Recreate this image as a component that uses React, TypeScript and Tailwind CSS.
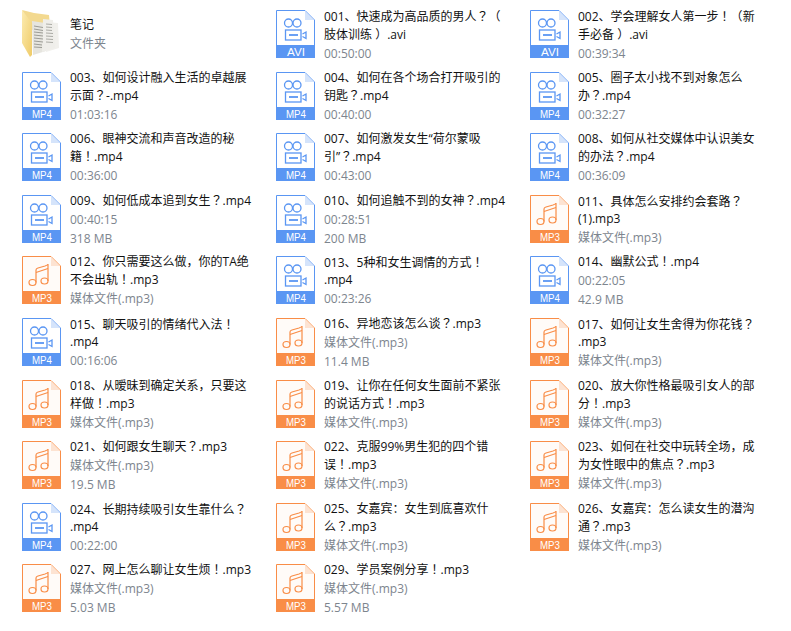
type Kind = "folder" | "AVI" | "MP4" | "MP3";

type Item = { kind: Kind; title: string[]; lines: string[] };

const MEDIA = "媒体文件(.mp3)";

const items: Item[] = [
  { kind: "folder", title: ["笔记"], lines: ["文件夹"] },
  { kind: "AVI", title: ["001、快速成为高品质的男人？（", "肢体训练 ）.avi"], lines: ["00:50:00"] },
  { kind: "AVI", title: ["002、学会理解女人第一步！（新", "手必备 ）.avi"], lines: ["00:39:34"] },
  { kind: "MP4", title: ["003、如何设计融入生活的卓越展", "示面？-.mp4"], lines: ["01:03:16"] },
  { kind: "MP4", title: ["004、如何在各个场合打开吸引的", "钥匙？.mp4"], lines: ["00:40:00"] },
  { kind: "MP4", title: ["005、圈子太小找不到对象怎么", "办？.mp4"], lines: ["00:32:27"] },
  { kind: "MP4", title: ["006、眼神交流和声音改造的秘", "籍！.mp4"], lines: ["00:36:00"] },
  { kind: "MP4", title: ["007、如何激发女生“荷尔蒙吸", "引”？.mp4"], lines: ["00:43:00"] },
  { kind: "MP4", title: ["008、如何从社交媒体中认识美女", "的办法？.mp4"], lines: ["00:36:09"] },
  { kind: "MP4", title: ["009、如何低成本追到女生？.mp4"], lines: ["00:40:15", "318 MB"] },
  { kind: "MP4", title: ["010、如何追触不到的女神？.mp4"], lines: ["00:28:51", "200 MB"] },
  { kind: "MP3", title: ["011、具体怎么安排约会套路？", "(1).mp3"], lines: [MEDIA] },
  { kind: "MP3", title: ["012、你只需要这么做，你的TA绝", "不会出轨！.mp3"], lines: [MEDIA] },
  { kind: "MP4", title: ["013、5种和女生调情的方式！", ".mp4"], lines: ["00:23:26"] },
  { kind: "MP4", title: ["014、幽默公式！.mp4"], lines: ["00:22:05", "42.9 MB"] },
  { kind: "MP4", title: ["015、聊天吸引的情绪代入法！", ".mp4"], lines: ["00:16:06"] },
  { kind: "MP3", title: ["016、异地恋该怎么谈？.mp3"], lines: [MEDIA, "11.4 MB"] },
  { kind: "MP3", title: ["017、如何让女生舍得为你花钱？", ".mp3"], lines: [MEDIA] },
  { kind: "MP3", title: ["018、从暧昧到确定关系，只要这", "样做！.mp3"], lines: [MEDIA] },
  { kind: "MP3", title: ["019、让你在任何女生面前不紧张", "的说话方式！.mp3"], lines: [MEDIA] },
  { kind: "MP3", title: ["020、放大你性格最吸引女人的部", "分！.mp3"], lines: [MEDIA] },
  { kind: "MP3", title: ["021、如何跟女生聊天？.mp3"], lines: [MEDIA, "19.5 MB"] },
  { kind: "MP3", title: ["022、克服99%男生犯的四个错", "误！.mp3"], lines: [MEDIA] },
  { kind: "MP3", title: ["023、如何在社交中玩转全场，成", "为女性眼中的焦点？.mp3"], lines: [MEDIA] },
  { kind: "MP4", title: ["024、长期持续吸引女生靠什么？", ".mp4"], lines: ["00:22:00"] },
  { kind: "MP3", title: ["025、女嘉宾：女生到底喜欢什", "么？.mp3"], lines: [MEDIA] },
  { kind: "MP3", title: ["026、女嘉宾：怎么读女生的潜沟", "通？.mp3"], lines: [MEDIA] },
  { kind: "MP3", title: ["027、网上怎么聊让女生烦！.mp3"], lines: [MEDIA, "5.03 MB"] },
  { kind: "MP3", title: ["029、学员案例分享！.mp3"], lines: [MEDIA, "5.57 MB"] },
];

function FolderIcon() {
  return (
    <svg width="39" height="48" viewBox="0 0 39 48" className="shrink-0">
      <defs>
        <linearGradient id="fold" x1="0" y1="0" x2="1" y2="1">
          <stop offset="0" stopColor="#fcebb0" />
          <stop offset="1" stopColor="#efcb68" />
        </linearGradient>
      </defs>
      <path d="M0 0 L12 3 L27 5 L28 16 L10 20 Z" fill="#f3d98f" />
      <path d="M24 12 L36 13 L37 38 L24 42 Z" fill="#f1f0ec" />
      <path d="M10 11 L23 13 L24 41 L11 45 Z" fill="#e6e5df" />
      <path d="M21 9 L31 10 L33 38 L20 42 Z" fill="#efeeea" />
      <path d="M12 16 L21 17.5 M12 19 L21 20.5 M12 22 L21 23 M12 25 L21 26 M12 28 L21 29 M12 31 L21 32 M12 34 L20 35 M12 37 L20 37.5" stroke="#9c9c96" strokeWidth="1" />
      <path d="M24 14 L30 14.5 M24 17 L30 17.5 M24 20 L30 20.5 M24 23 L31 23.5 M24 26 L31 26.5 M24 29 L31 29.5 M24 32 L31 32.5" stroke="#acaca6" strokeWidth="1" />
      <path d="M0 0 L0 33 L8 47 L10 45 L10 13 Z" fill="url(#fold)" />
    </svg>
  );
}

function FileIcon({ kind }: { kind: Kind }) {
  const color = kind === "MP3" ? "#f98d47" : "#5a96f3";
  return (
    <svg width="39" height="48" viewBox="0 0 39 48" className="shrink-0">
      <path d="M0.5 0.5 H29 L38.5 10 V47.5 H0.5 Z" fill={kind === "MP3" ? "#fffbf8" : "#ffffff"} stroke={color} />
      <path d="M29 1 V10 H38 Z" fill={kind === "MP3" ? "#fde3d2" : "#d5e4fb"} />
      <rect x="0" y="35" width="39" height="13" fill={color} />
      {kind === "MP3" ? (
        <g fill="none" stroke={color} strokeWidth="1.2">
          <ellipse cx="10.5" cy="26.5" rx="3.5" ry="3" />
          <ellipse cx="22.5" cy="25" rx="3.5" ry="3" />
          <path d="M14 26.5 V14 C14 12.8 14.8 12.4 16 12 L23 10 C24.5 9.5 26 8.8 26 8 V25" />
          <path d="M14 16.5 L26 12.5" />
        </g>
      ) : (
        <g fill="none" stroke={color} strokeWidth="1.3">
          <circle cx="12.5" cy="13" r="4" />
          <circle cx="21" cy="13" r="4" />
          <rect x="9.5" y="20" width="15.5" height="10" />
          <path d="M13 25 H22" strokeWidth="1.8" />
          <path d="M26.5 24 L30 22 V28.5 L26.5 26.5" />
        </g>
      )}
      <text
        x="20"
        y="46"
        textAnchor="middle"
        fill="#ffffff"
        fontSize="11"
        textLength={kind === "AVI" ? 18 : 20}
        lengthAdjust="spacingAndGlyphs"
        fontFamily="'Liberation Sans', sans-serif"
      >
        {kind}
      </text>
    </svg>
  );
}

// ？ and ！ sit centred in the reference, as in the TC cut of the font
function Title({ text }: { text: string }) {
  return (
    <div className="text-[#111111]">
      {text.split(/([？！（）])/).map((part, i) =>
        /^[？！（）]$/.test(part) ? (
          <span key={i} className="font-['Noto_Sans_CJK_TC']">{part}</span>
        ) : (
          part
        ),
      )}
    </div>
  );
}

function Entry({ item }: { item: Item }) {
  return (
    <div className="flex h-[48px] items-center gap-[9px]">
      {item.kind === "folder" ? <FolderIcon /> : <FileIcon kind={item.kind} />}
      <div className="text-[12px] leading-[17px] whitespace-nowrap">
        {item.title.map((t) => (
          <Title key={t} text={t} />
        ))}
        {item.lines.map((l) => (
          <div key={l} className="mt-[2px] text-[#7d858e]">{l}</div>
        ))}
      </div>
    </div>
  );
}

export default function App() {
  return (
    <div className="w-[791px] h-[631px] overflow-hidden bg-white pl-[22px] pt-[10px] grid grid-cols-[254px_254px_254px] auto-rows-[61.6px] items-start font-['Open_Sans','Noto_Sans_CJK_SC',sans-serif]">
      {items.map((item) => (
        <Entry key={item.title[0]} item={item} />
      ))}
    </div>
  );
}
